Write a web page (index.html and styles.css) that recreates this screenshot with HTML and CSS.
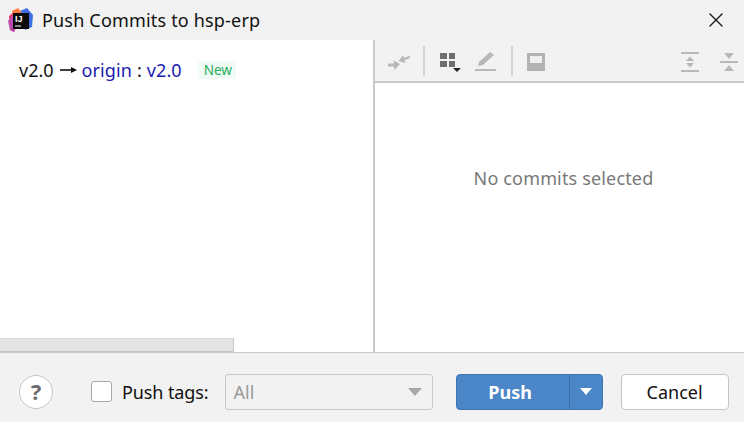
FILE: index.html
```html
<!DOCTYPE html>
<html lang="en">
<head>
<meta charset="utf-8">
<title>Push Commits to hsp-erp</title>
<link rel="stylesheet" href="styles.css">
</head>
<body>
<div class="dialog">
  <header class="titlebar">
    <svg class="logo" width="26" height="26" viewBox="0 0 26 26">
      <path d="M2 9 L9 3 L16 5 L12 14 L7 25 L3 23 Z" fill="#ef3a6e"/>
      <path d="M1 14 L6 8 L10 18 L7 25 L3 23 Z" fill="#b94bb0"/>
      <path d="M13 4 L20 1 L26 8 L25 20 L18 23 Z" fill="#3f6fe0"/>
      <path d="M5 4 L11 1 L15 6 L6 9 Z" fill="#ff7a3c"/>
      <rect x="6" y="6" width="16" height="16" fill="#0a0a0a"/>
      <text class="logo-text" x="8" y="15">IJ</text>
      <rect x="8" y="18.5" width="6" height="1" fill="#fff"/>
    </svg>
    <h1 class="title">Push Commits to hsp-erp</h1>
    <svg class="close" width="16" height="16" viewBox="0 0 16 16">
      <path d="M1.5 1.5 L14.5 14.5 M14.5 1.5 L1.5 14.5" stroke="#1a1a1a" stroke-width="1.4" fill="none"/>
    </svg>
  </header>

  <main class="content">
    <section class="tree">
      <div class="row">
        <span>v2.0</span>
        <svg class="arrow" width="18" height="8" viewBox="0 0 18 8">
          <path d="M0 4 H12" stroke="#111" stroke-width="1.6"/>
          <path d="M11 1 L17 4 L11 7 Z" fill="#111"/>
        </svg>
        <span class="link">origin</span>
        <span class="colon">:</span>
        <span class="link">v2.0</span>
        <span class="badge">New</span>
      </div>
      <div class="hscroll"></div>
    </section>

    <section class="details">
      <div class="toolbar">
        <button class="tool tool-first" type="button" aria-label="Collapse">
          <svg width="24" height="24" viewBox="0 0 24 24">
            <path d="M23 5.5 L17 8 L16 5 L11.5 11 L18.5 13 L17.5 10.2 L23 8 Z" fill="#b8b8b8"/>
            <path d="M1 13.5 L7 13.5 L6.5 10.5 L13 14 L7.5 20 L7 16.5 L1 16.5 Z" fill="#b8b8b8"/>
          </svg>
        </button>
        <span class="sep"></span>
        <button class="tool" type="button" aria-label="Group">
          <svg width="24" height="24" viewBox="0 0 24 24">
            <rect x="2" y="3" width="7" height="6" fill="#6e6e6e"/>
            <rect x="11" y="3" width="6" height="6" fill="#6e6e6e"/>
            <rect x="2" y="11" width="7" height="6" fill="#6e6e6e"/>
            <rect x="11" y="11" width="6" height="6" fill="#6e6e6e"/>
            <path d="M15 18 H23 L19 22 Z" fill="#222"/>
          </svg>
        </button>
        <button class="tool" type="button" aria-label="Edit">
          <svg width="24" height="24" viewBox="0 0 24 24">
            <path d="M4 16 L5 12 L16 2 L20 5 L9 15 Z" fill="#b8b8b8"/>
            <rect x="1" y="19" width="21" height="2" fill="#b8b8b8"/>
          </svg>
        </button>
        <span class="sep sep-wide"></span>
        <button class="tool tool-preview" type="button" aria-label="Preview">
          <svg width="24" height="24" viewBox="0 0 24 24">
            <rect x="3" y="3" width="18" height="18" fill="#b2b2b2"/>
            <rect x="6" y="6" width="12" height="7" fill="#efefef"/>
          </svg>
        </button>
        <span class="spacer"></span>
        <button class="tool" type="button" aria-label="Expand all">
          <svg width="24" height="24" viewBox="0 0 24 24">
            <rect x="3" y="2" width="18" height="2" fill="#b8b8b8"/>
            <rect x="3" y="20" width="18" height="2" fill="#b8b8b8"/>
            <path d="M12 6.5 L16 11 H8 Z M12 17.5 L16 13 H8 Z" fill="#b8b8b8"/>
          </svg>
        </button>
        <button class="tool tool-last" type="button" aria-label="Collapse all">
          <svg width="24" height="24" viewBox="0 0 24 24">
            <rect x="3" y="11" width="18" height="2" fill="#b8b8b8"/>
            <path d="M7 3 H17 L12 9 Z M7 21 H17 L12 15 Z" fill="#b8b8b8"/>
          </svg>
        </button>
      </div>
      <div class="empty">No commits selected</div>
    </section>
  </main>

  <footer class="footer">
    <div class="help">?</div>
    <label class="tags">
      <span class="checkbox"></span>
      <span class="tags-label">Push tags:</span>
    </label>
    <div class="combo">
      <span>All</span>
      <svg width="14" height="8" viewBox="0 0 14 8"><path d="M0 0 H14 L7 8 Z" fill="#a8a8a8"/></svg>
    </div>
    <div class="split">
      <button class="push" type="button">Push</button>
      <button class="push-arrow" type="button" aria-label="More">
        <svg width="12" height="7" viewBox="0 0 12 7"><path d="M0 0 H12 L6 7 Z" fill="#fff"/></svg>
      </button>
    </div>
    <button class="cancel" type="button">Cancel</button>
  </footer>
</div>
</body>
</html>
```
FILE: styles.css
```css
* { box-sizing: border-box; }
html, body { margin: 0; padding: 0; }
body {
  width: 744px;
  height: 422px;
  overflow: hidden;
  background: #f2f2f2;
  color: #111;
  font-family: "Noto Sans", "Open Sans", sans-serif;
  font-size: 18px;
}
.dialog { display: flex; flex-direction: column; height: 422px; }

.titlebar {
  flex: 0 0 40px;
  display: flex;
  align-items: center;
  padding: 0 20px 0 7px;
  background: #f2f2f2;
}
.logo { flex: none; margin-right: 9px; margin-top: -1px; }
.logo-text { font: 700 9px "Liberation Sans", sans-serif; fill: #fff; }
.title { flex: 1; margin: 0; font-size: 18px; font-weight: 400; line-height: 24px; color: #111; letter-spacing: 0.18px; }
.close { flex: none; }

.content { flex: 0 0 313px; display: flex; border-bottom: 1px solid #c9c9c9; }
.tree {
  flex: 0 0 375px;
  display: flex;
  flex-direction: column;
  justify-content: space-between;
  background: #fff;
  border-right: 2px solid #c9c9c9;
}
.row { display: flex; align-items: center; height: 24px; margin-top: 18px; padding-left: 19px; font-size: 18px; }
.arrow { margin: 0 4px 0 6px; }
.link { color: #1a1ab0; letter-spacing: 0.1px; }
.colon { margin: 0 5px; }
.badge {
  margin-left: 16px;
  padding: 0 4px 0 6px;
  font-size: 13.5px;
  line-height: 18px;
  color: #1fae5b;
  background: #f0fbf3;
  border-radius: 3px;
}
.hscroll {
  width: 234px;
  height: 14px;
  background: #e3e3e3;
  border-top: 1px solid #dadada;
  border-right: 1px solid #c4c4c4;
  border-bottom: 1px solid #c4c4c4;
}

.details { flex: 1; display: flex; flex-direction: column; background: #fff; }
.toolbar {
  flex: 0 0 43px;
  display: flex;
  align-items: center;
  padding-top: 2px;
  background: #f2f2f2;
  border-bottom: 2px solid #c9c9c9;
}
.tool {
  flex: none;
  width: 24px;
  height: 24px;
  margin: 0 0 0 12px;
  padding: 0;
  border: 0;
  background: none;
  display: block;
}
.tool svg { display: block; }
.tool-last { margin-left: 15px; margin-right: 3px; }
.sep { flex: none; width: 2px; height: 30px; margin: -2px 0 0 12px; background: #d4d4d4; }
.sep-wide { margin-left: 13px; }
.sep + .tool { margin-left: 13px; }
.sep + .tool-preview { margin-left: 11px; }
.spacer { flex: 1; }
.empty {
  padding: 83px 0 0 8px;
  text-align: center;
  font-size: 18px;
  line-height: 24px;
  color: #787878;
  letter-spacing: 0.16px;
}

.footer {
  flex: 1;
  display: flex;
  align-items: center;
  padding: 8px 15px 0 19px;
  background: #f2f2f2;
}
.help {
  flex: none;
  width: 34px;
  height: 34px;
  border-radius: 50%;
  border: 1px solid #c4c4c4;
  background: #fff;
  color: #6c6c6c;
  font-size: 22px;
  font-weight: 700;
  line-height: 31px;
  text-align: center;
}
.tags { flex: none; display: flex; align-items: center; margin-left: 38px; font-size: 18px; }
.tags-label { white-space: nowrap; letter-spacing: -0.1px; }
.checkbox {
  width: 21px;
  height: 21px;
  margin-right: 10px;
  background: #fff;
  border: 1px solid #a9a9a9;
  border-radius: 3px;
}
.combo {
  flex: none;
  width: 208px;
  height: 36px;
  margin-left: 16px;
  padding: 0 10px 0 8px;
  display: flex;
  align-items: center;
  justify-content: space-between;
  border: 1px solid #c8c8c8;
  border-radius: 3px;
  color: #9a9a9a;
}
.split {
  flex: none;
  display: flex;
  width: 147px;
  height: 36px;
  margin-left: 23px;
  background: #4a86c8;
  border: 1px solid #3d76b6;
  border-radius: 4px;
}
.push, .push-arrow { border: 0; background: none; color: #fff; }
.push { flex: 1; padding: 0 5px 0 0; font: 700 18px "Noto Sans", sans-serif; }
.push-arrow {
  flex: 0 0 33px;
  padding: 0;
  border-left: 1px solid #3a6ea8;
  display: flex;
  align-items: center;
  justify-content: center;
}
.cancel {
  flex: none;
  width: 108px;
  height: 36px;
  margin-left: 18px;
  padding: 0;
  background: #fff;
  border: 1px solid #c4c4c4;
  border-radius: 4px;
  color: #111;
  font: 400 18px "Noto Sans", sans-serif;
}
```
